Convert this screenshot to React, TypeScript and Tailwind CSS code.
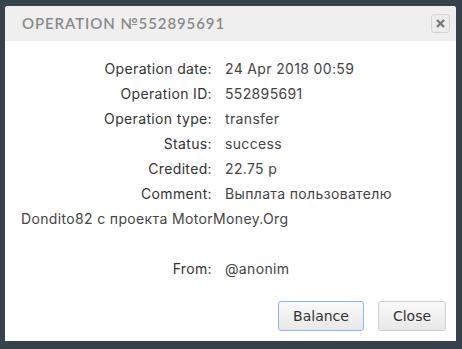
import React from "react";

const rows: [string, string][] = [
  ["Operation date:", "24 Apr 2018 00:59"],
  ["Operation ID:", "552895691"],
  ["Operation type:", "transfer"],
  ["Status:", "success"],
  ["Credited:", "22.75 р"],
  ["Comment:", "Выплата пользователю"],
];

function Row({ label, value }: { label: string; value: string }) {
  return (
    <div className="flex">
      <span className="w-[191px] shrink-0 text-right text-[#333]">{label}</span>
      <span className="ml-[13px] text-[#444]">{value}</span>
    </div>
  );
}

export default function App() {
  return (
    <div className="w-[462px] h-[349px] bg-[#36434b] pt-[6px] pl-[5px]">
      <div className="w-[451px] h-[335px] bg-white rounded-tl-[3px] rounded-tr-[3px] flex flex-col">
        <div className="h-[35px] bg-[#efefef] flex items-center justify-between pl-[17px] pr-[6px] rounded-t-[3px]">
          <div
            className="text-[15px] tracking-[0.9px] text-[#8a8a8a]"
            style={{ fontFamily: "Lato, 'Liberation Sans', sans-serif", fontWeight: 600 }}
          >
            OPERATION №552895691
          </div>
          <div className="w-[19px] h-[19px] rounded-[3px] border border-[#d4d4d4] bg-[#ececec] flex items-center justify-center">
            <svg width="9" height="9" viewBox="0 0 9 9">
              <path d="M1 1L8 8M8 1L1 8" stroke="#7a7a7a" strokeWidth="2.4" />
            </svg>
          </div>
        </div>
        <div
          className="px-[16px] pt-[15px] text-[14px] leading-[25px] tracking-[0.35px]"
          style={{ fontFamily: "Inter, 'Noto Sans', sans-serif" }}
        >
          {rows.map(([l, v]) => (
            <Row key={l} label={l} value={v} />
          ))}
          <div className="text-[#444]">Dondito82 с проекта MotorMoney.Org</div>
          <div className="h-[25px]" />
          <Row label="From:" value="@anonim" />
        </div>
        <div className="flex-1" />
        <div
          className="flex justify-end gap-[14px] pr-[10px] pb-[10px] text-[14px]"
          style={{ fontFamily: "'DejaVu Sans', Verdana, sans-serif" }}
        >
          <button className="w-[86px] h-[30px] rounded-[3px] border border-[#8fb3f0] bg-gradient-to-b from-[#fafafa] to-[#e8e8e8] text-[#333]">
            Balance
          </button>
          <button className="w-[68px] h-[30px] rounded-[3px] border border-[#cfcfcf] bg-gradient-to-b from-[#fafafa] to-[#e8e8e8] text-[#333]">
            Close
          </button>
        </div>
      </div>
    </div>
  );
}
